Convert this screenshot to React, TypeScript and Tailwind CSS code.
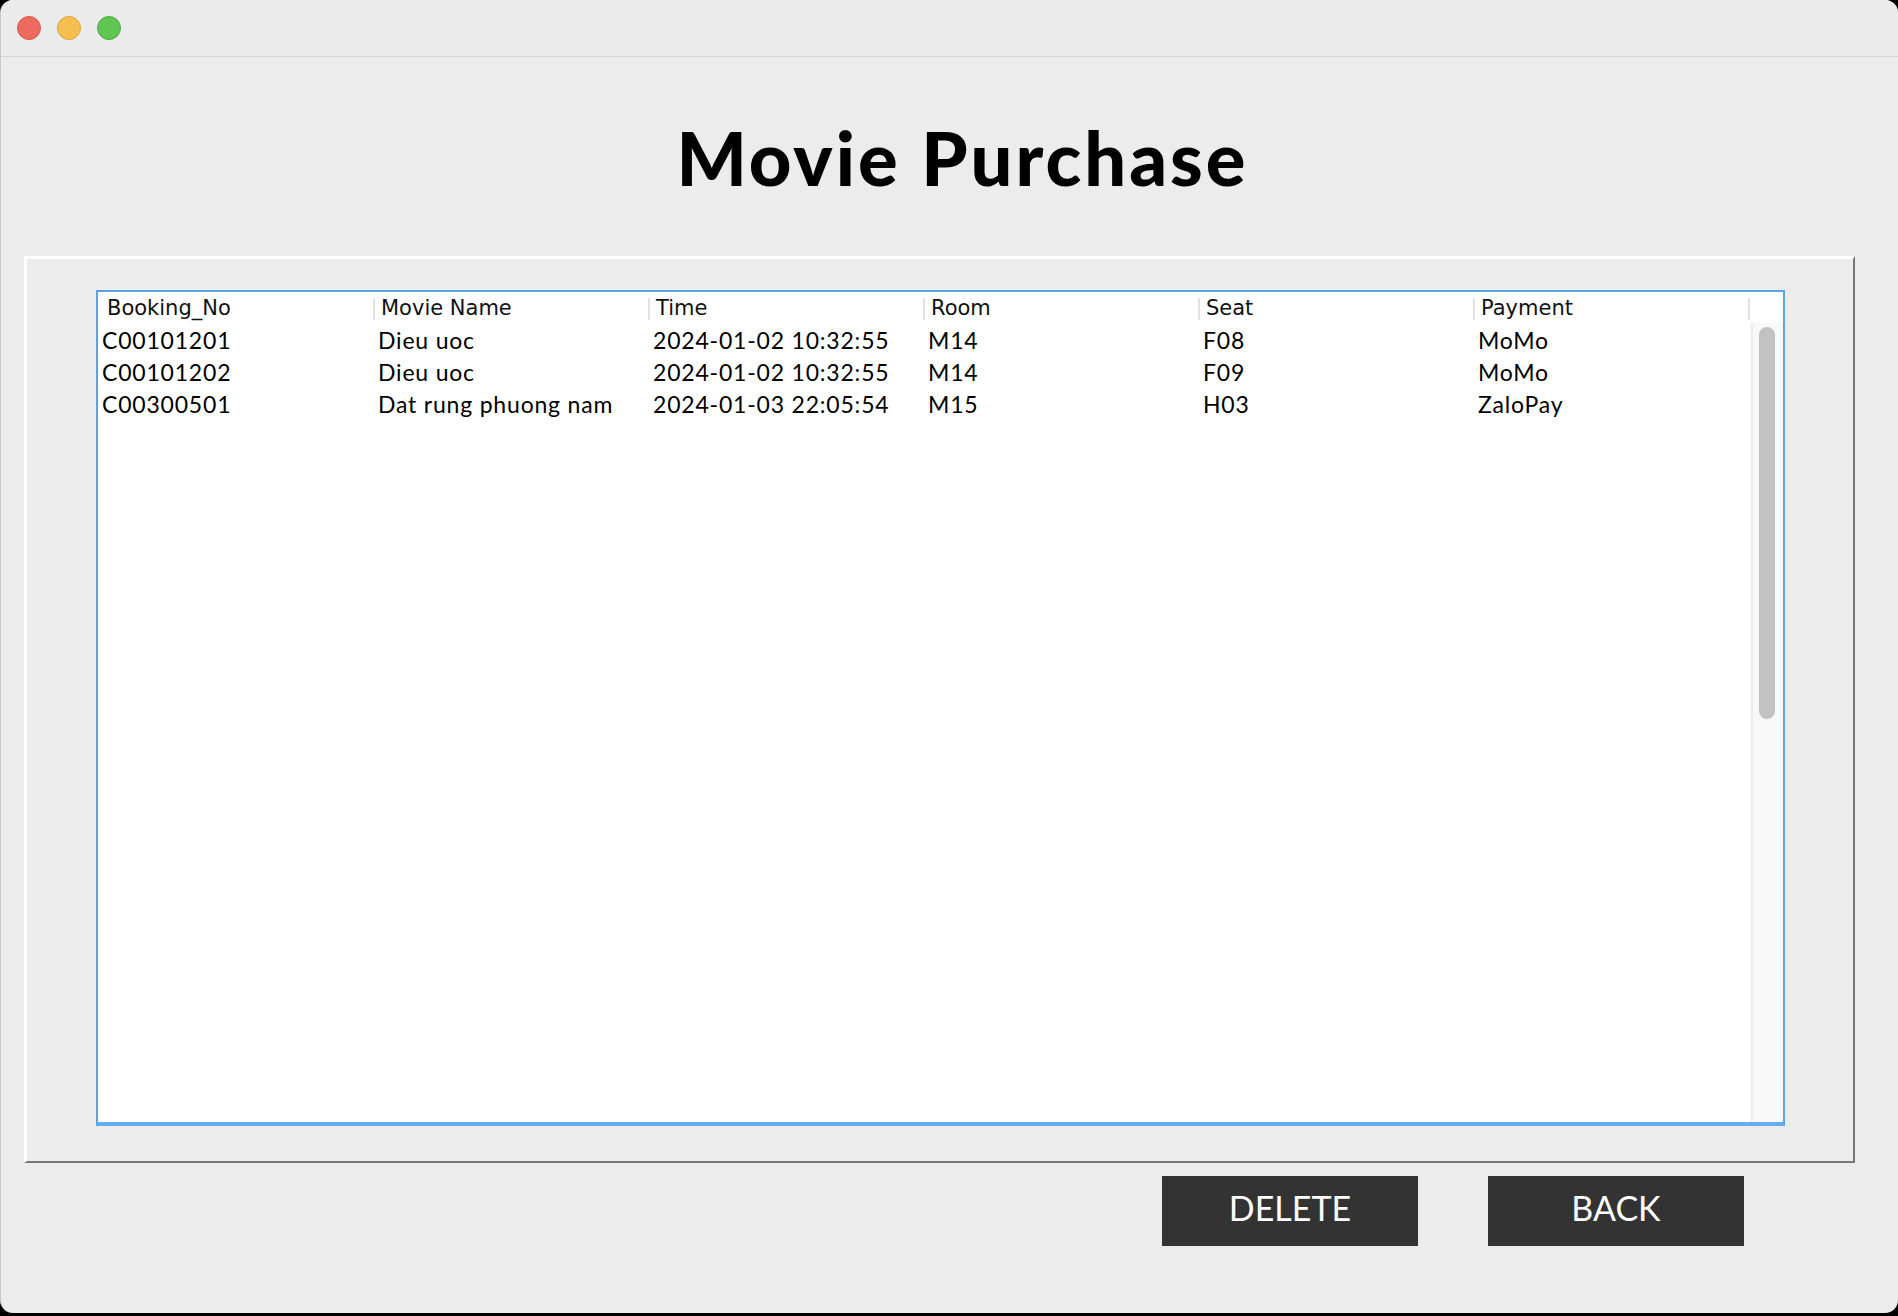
import React from 'react'

const columns = ['Booking_No', 'Movie Name', 'Time', 'Room', 'Seat', 'Payment']

const rows = [
  ['C00101201', 'Dieu uoc', '2024-01-02 10:32:55', 'M14', 'F08', 'MoMo'],
  ['C00101202', 'Dieu uoc', '2024-01-02 10:32:55', 'M14', 'F09', 'MoMo'],
  ['C00300501', 'Dat rung phuong nam', '2024-01-03 22:05:54', 'M15', 'H03', 'ZaloPay'],
]

const bodyFont = { fontFamily: 'Lato, "Open Sans", sans-serif', letterSpacing: '0.8px' }

function TrafficLights() {
  return (
    <div className="flex items-center gap-[16px] pl-[16px]">
      <span className="w-[24px] h-[24px] rounded-full bg-[#ed6a5e] border border-[#d65a4f]" />
      <span className="w-[24px] h-[24px] rounded-full bg-[#f5bf4f] border border-[#d9a43d]" />
      <span className="w-[24px] h-[24px] rounded-full bg-[#61c554] border border-[#52a945]" />
    </div>
  )
}

function PurchaseTable() {
  return (
    <div className="flex-1 flex flex-col bg-white border-2 border-[#5ba3e3] border-b-4 border-b-[#62aeef]">
      <div className="flex h-[31px] items-center pt-[2px]">
        {columns.map((c, i) => (
          <div key={c} className="w-[275px] h-full flex items-center">
            {i > 0 && <span className="w-[2px] h-[22px] bg-[#e2e2e2]" />}
            <span
              className={`text-[21px] text-[#111] leading-none ${i === 0 ? 'pl-[9px]' : 'pl-[6px]'}`}
              style={{ fontFamily: '"DejaVu Sans", sans-serif' }}
            >
              {c}
            </span>
          </div>
        ))}
        <div className="h-full flex items-center">
          <span className="w-[2px] h-[22px] bg-[#e2e2e2]" />
        </div>
      </div>
      <div className="flex flex-1">
        <div className="flex-1 pt-[1px]">
          {rows.map((r, ri) => (
            <div key={ri} className="flex h-[32px] items-center">
              {r.map((cell, ci) => (
                <div
                  key={ci}
                  className={`w-[275px] text-[23px] text-black leading-none ${ci === 0 ? 'pl-[4px]' : 'pl-[5px]'}`}
                  style={bodyFont}
                >
                  {cell}
                </div>
              ))}
            </div>
          ))}
        </div>
        <div className="w-[32px] bg-[#f8f8f8] border-l-2 border-[#ececec] pt-[4px] pl-[6px]">
          <div className="w-[16px] h-[392px] rounded-full bg-[#c2c2c2]" />
        </div>
      </div>
    </div>
  )
}

export default function App() {
  return (
    <div className="w-[1898px] h-[1316px] bg-black">
      <div className="w-[1898px] h-[1313px] rounded-[13px] overflow-hidden bg-[#ececec] flex flex-col border-l border-[#c8c8c8]">
        <div className="h-[57px] shrink-0 bg-[#ebebeb] border-b border-[#d2d2d2] flex items-center">
          <TrafficLights />
        </div>
        <div className="h-[199px] shrink-0 flex items-center justify-center pl-[26px] pt-[2px]">
          <h1
            className="text-[74px] font-black text-black leading-none"
            style={{ fontFamily: 'Lato, "Liberation Sans", sans-serif', letterSpacing: '3px' }}
          >
            Movie Purchase
          </h1>
        </div>
        <div className="ml-[23px] mr-[43px] h-[907px] shrink-0 flex border-t-[3px] border-l-[3px] border-white border-b-2 border-r-2 border-b-[#777] border-r-[#777] pt-[31px] pl-[69px] pr-[68px] pb-[35px]">
          <PurchaseTable />
        </div>
        <div className="flex justify-end gap-[70px] pr-[154px] pt-[13px]">
          {['DELETE', 'BACK'].map((b) => (
            <button
              key={b}
              className="w-[256px] h-[70px] bg-[#333333] text-white text-[34px] flex items-center justify-center pb-[8px]"
              style={{ fontFamily: 'Lato, "Open Sans", sans-serif' }}
            >
              {b}
            </button>
          ))}
        </div>
      </div>
    </div>
  )
}
